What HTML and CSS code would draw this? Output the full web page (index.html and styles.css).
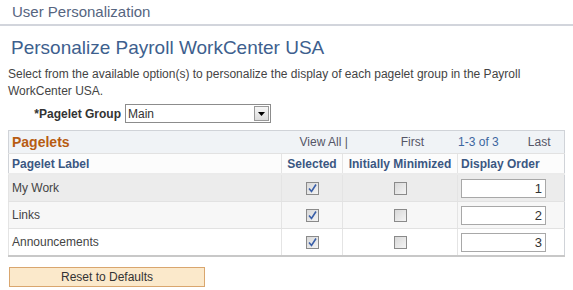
FILE: index.html
```html
<!DOCTYPE html>
<html lang="en">
<head>
    <meta charset="UTF-8">
    <title>User Personalization</title>
    <link rel="stylesheet" href="styles.css">
</head>
<body>

<div class="pagetitle">User Personalization</div>

<h1>Personalize Payroll WorkCenter USA</h1>

<p class="desc">Select from the available option(s) to personalize the display of each pagelet group in the Payroll WorkCenter USA.</p>

<div class="field-row">
    <label class="field-label">*Pagelet Group</label>
    <div class="dropdown">
        <span class="dropdown-value">Main</span>
        <span class="dropdown-btn"><svg width="7" height="4" viewBox="0 0 7 4"><path d="M0 0h7L3.5 4z" fill="#000"/></svg></span>
    </div>
</div>

<table class="grid">
    <tr class="grid-nav">
        <td class="grid-title">Pagelets</td>
        <td colspan="3">
            <div class="nav-links">
                <span class="view-all">View All |</span>
                <span class="first">First</span>
                <span class="count">1-3 of 3</span>
                <span class="last">Last</span>
            </div>
        </td>
    </tr>
    <tr class="grid-head">
        <th class="col-label">Pagelet Label</th>
        <th class="col-sel">Selected</th>
        <th class="col-min">Initially Minimized</th>
        <th class="col-order">Display Order</th>
    </tr>
    <tr class="row-active">
        <td>My Work</td>
        <td class="center"><span class="check on"><svg width="9" height="9" viewBox="0 0 9 9"><path d="M1 4.5l2.5 3L8 0.5" fill="none" stroke="#3a5fa8" stroke-width="1.6"/></svg></span></td>
        <td class="center"><span class="check"></span></td>
        <td><span class="order-input">1</span></td>
    </tr>
    <tr class="row-alt">
        <td>Links</td>
        <td class="center"><span class="check on"><svg width="9" height="9" viewBox="0 0 9 9"><path d="M1 4.5l2.5 3L8 0.5" fill="none" stroke="#3a5fa8" stroke-width="1.6"/></svg></span></td>
        <td class="center"><span class="check"></span></td>
        <td><span class="order-input">2</span></td>
    </tr>
    <tr>
        <td>Announcements</td>
        <td class="center"><span class="check on"><svg width="9" height="9" viewBox="0 0 9 9"><path d="M1 4.5l2.5 3L8 0.5" fill="none" stroke="#3a5fa8" stroke-width="1.6"/></svg></span></td>
        <td class="center"><span class="check"></span></td>
        <td><span class="order-input">3</span></td>
    </tr>
</table>

<button class="reset-btn">Reset to Defaults</button>

</body>
</html>
```

FILE: styles.css
```css
body {
    font-family: 'Liberation Sans', Arial, sans-serif;
    font-size: 12px;
    color: #333;
    margin: 0;
    padding: 0;
    background: #fff;
}
.pagetitle {
    font-size: 15px;
    color: #56657f;
    height: 24px;
    line-height: 24px;
    padding-left: 12px;
    border-bottom: 2px solid #d2d5dc;
}
h1 {
    font-size: 19px;
    font-weight: normal;
    color: #3e5f8e;
    margin: 10px 0 0 11px;
    line-height: 24px;
}
.desc {
    margin: 6px 8px 0 8px;
    line-height: 17px;
    color: #444;
}
.field-row {
    display: flex;
    align-items: center;
    margin-top: 4px;
    margin-left: 8px;
}
.field-label {
    width: 113px;
    text-align: right;
    font-weight: bold;
    color: #333;
    margin-right: 4px;
}
.dropdown {
    width: 144px;
    height: 17px;
    border: 1px solid #8c8c8c;
    display: flex;
    align-items: center;
    justify-content: space-between;
    background: #fff;
}
.dropdown-value {
    padding-left: 2px;
    font-size: 12px;
}
.dropdown-btn {
    width: 15px;
    height: 15px;
    margin-right: 1px;
    border: 1px solid #999;
    box-sizing: border-box;
    background: linear-gradient(#f6f6f6, #dcdcdc);
    display: flex;
    align-items: center;
    justify-content: center;
}
.grid {
    margin: 7px 0 0 8px;
    width: 557px;
    border-collapse: collapse;
    border: 1px solid #d0d3d8;
    border-bottom: 2px solid #c8c8c8;
}
.grid td, .grid th {
    padding: 0 3px;
    font-size: 12px;
}
.grid-nav td {
    background: #f0f3f6;
    border-bottom: 1px solid #dde1e6;
}
.grid .grid-title {
    color: #b75c12;
    font-weight: bold;
    font-size: 14px;
    padding-left: 3px;
}
.nav-links {
    display: flex;
    color: #556;
}
.view-all {
    margin-left: 15px;
}
.first {
    margin-left: 53px;
}
.count {
    margin-left: 34px;
    color: #3c66a0;
}
.last {
    margin-left: 29px;
}
.grid-head th {
    height: 19px;
    background: #fcfcfc;
    color: #3b5782;
    font-weight: bold;
    text-align: center;
    border-left: 1px solid #e4e4e4;
    border-bottom: 2px solid #ebebeb;
}
.grid-head th.col-label {
    text-align: left;
    border-left: none;
}
.grid-head th.col-order {
    text-align: left;
}
.col-label { width: 266px; }
.col-sel { width: 54px; }
.col-min { width: 108px; }
.grid tr td {
    height: 26px;
    border-bottom: 1px solid #e2e2e2;
    border-left: 1px solid #e4e4e4;
    color: #444;
}
.grid tr.grid-nav td {
    border-left: none;
    height: 22px;
}
.row-active td {
    background: #ececec;
}
.row-alt td {
    background: #f7f7f7;
}
.center {
    text-align: center;
}
.check {
    display: inline-block;
    width: 11px;
    height: 11px;
    border: 1px solid #8a8a8a;
    background: linear-gradient(135deg, #d8d8d8, #f4f4f4);
    vertical-align: middle;
    position: relative;
}
.check svg {
    position: absolute;
    left: 1px;
    top: 1px;
}
.order-input {
    display: block;
    width: 80px;
    height: 17px;
    line-height: 17px;
    padding-right: 3px;
    text-align: right;
    border: 1px solid #a8a8a8;
    background: #fff;
    font-size: 13px;
    color: #333;
}
.reset-btn {
    display: block;
    margin: 10px 0 0 9px;
    width: 196px;
    height: 20px;
    font-family: 'Liberation Sans', Arial, sans-serif;
    font-size: 12px;
    color: #333;
    background: #fbe9cb;
    border: 1px solid #d9a66e;
    padding: 0;
}
```
